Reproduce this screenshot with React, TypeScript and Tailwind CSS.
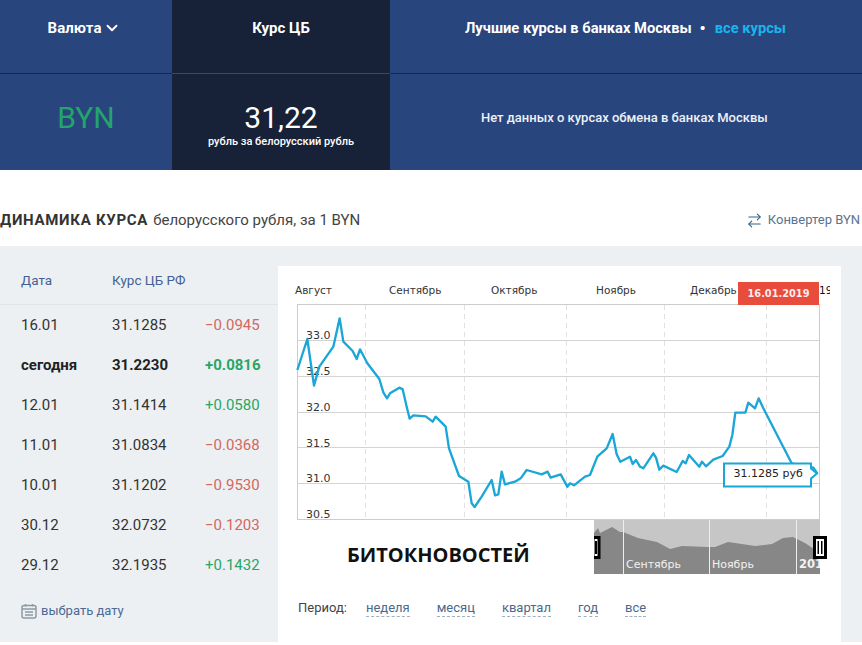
import React from "react";
import { ArrowRightLeft, ChevronDown } from "lucide-react";

const rows = [
  ["16.01", "31.1285", "−0.0945", "r"],
  ["сегодня", "31.2230", "+0.0816", "g"],
  ["12.01", "31.1414", "+0.0580", "g"],
  ["11.01", "31.0834", "−0.0368", "r"],
  ["10.01", "31.1202", "−0.9530", "r"],
  ["30.12", "32.0732", "−0.1203", "r"],
  ["29.12", "32.1935", "+0.1432", "g"],
];

const lineA = "52,315 82,222 102,362 118,305 160,245 179,160 190,230 218,258 230,282 240,253 262,295 298,342 310,382 321,400 330,385 358,368 368,373 380,425 389,461 400,451 437,454 458,470 467,455 497,485 507,550 537,633 565,650 575,715 584,726 605,695 635,645 645,691 655,688 665,620 675,658 705,650 722,640 740,615 785,628 803,620 812,638 842,628 862,665";
const lineB = "870,655 882,661 915,635 930,630 952,575 980,550 998,507 1010,568 1021,590 1050,575 1058,597 1068,585 1080,605 1090,610 1120,565 1128,578 1138,614 1150,602 1190,621 1208,588 1217,595 1227,570 1258,605 1266,590 1278,604 1300,584 1328,573 1348,545 1357,510 1366,443 1396,443 1405,413 1425,430 1436,400 1450,430 1535,595 1600,608 1612,625";

const months: [number, string][] = [[295, "Август"], [389, "Сентябрь"], [491, "Октябрь"], [596, "Ноябрь"], [690, "Декабрь"]];
const ticks: [number, string][] = [[339, "33.0"], [375, "32.5"], [411, "32.0"], [447, "31.5"], [482, "31.0"], [518, "30.5"]];

function Chart() {
  return (
    <svg viewBox="278 266 563 254" width={563} height={254} className="block" style={{ fontFamily: "'DejaVu Sans', sans-serif" }}>
      <rect x={297.5} y={304.5} width={522} height={215} fill="none" stroke="#ccc" />
      {[340.5, 376.5, 412.5, 447.5, 483.5].map((y) => (
        <line key={y} x1={298} x2={819} y1={y} y2={y} stroke="#d4d4d4" />
      ))}
      {[365.5, 464.5, 566.5, 664.5, 766.5].map((x) => (
        <line key={x} x1={x} x2={x} y1={305} y2={519} stroke="#e4e0e2" strokeDasharray="5 4" />
      ))}
      {months.map(([x, t]) => (
        <text key={t} x={x} y={294} fontSize={10.5} fill="#333">{t}</text>
      ))}
      <text x={819} y={294} fontSize={10.5} fill="#111">19</text>
      <rect x={830} y={280} width={11} height={20} fill="#fff" />
      {ticks.map(([y, t]) => (
        <text key={t} x={306} y={y} fontSize={11} fill="#333">{t}</text>
      ))}
      <g transform="translate(280 265) scale(0.33333)" fill="none" stroke="#1ba6d8" strokeWidth={7} strokeLinejoin="round">
        <polyline points={lineA + " " + lineB} />
      </g>
      <path d="M724 463.5H811V468.5L817 473.5L811 478.5V486.5H724Z" fill="#fff" stroke="#1ba6d8" strokeWidth={2} />
      <text x={733.5} y={477} fontSize={11} fill="#222">31.1285 руб</text>
      <rect x={738} y={282} width={81} height={23} fill="#e74c3c" />
      <text x={778.5} y={297} fontSize={9.8} fontWeight={700} fill="#fff" textAnchor="middle" opacity={0.9}>16.01.2019</text>
    </svg>
  );
}

function Navigator() {
  return (
    <svg viewBox="594 520 233 54" width={233} height={54} className="block" style={{ fontFamily: "'DejaVu Sans', sans-serif" }}>
      <rect x={594} y={520} width={226} height={54} fill="#c6c6c6" />
      <polygon fill="#878787" points="594,533 598,528 600,533 612,527 620,532 623,532 638,538 657,542 670,549 682,546 708,547 715,547 728,542 735,543 755,546 772,544 783,538 793,537 805,543 820,553 820,574 594,574" />
      {[623.5, 709.5, 796.5].map((x) => (
        <line key={x} x1={x} x2={x} y1={520} y2={574} stroke="#eee" />
      ))}
      <text x={626} y={568} fontSize={11} fill="#f2f2f2" fontWeight={500}>Сентябрь</text>
      <text x={712} y={568} fontSize={11} fill="#f2f2f2" fontWeight={500}>Ноябрь</text>
      <svg x={594} y={520} width={226} height={54}>
        <text x={205} y={48} fontSize={11.5} fill="#f2f2f2" fontWeight={700}>2019</text>
      </svg>
      <rect x={593} y={537.5} width={6} height={20} fill="#fff" stroke="#000" strokeWidth={3} />
      <rect x={595} y={541} width={2} height={13} fill="#000" />
      <rect x={814.5} y={537.5} width={11} height={20} fill="#fff" stroke="#000" strokeWidth={3} />
      <rect x={817.5} y={541} width={1.5} height={13} fill="#000" />
      <rect x={821} y={541} width={1.5} height={13} fill="#000" />
    </svg>
  );
}

export default function App() {
  return (
    <div className="w-[862px] h-[645px] overflow-hidden bg-white font-['Roboto',sans-serif] text-[#333]">
      <div className="grid grid-cols-[172px_218px_1fr] grid-rows-[74px_96px] h-[170px] bg-[#28457e] text-white">
        <div className="flex justify-center pt-[19px] pr-[3px] border-b border-[#14264e] text-[15px] font-bold leading-[18px]">
          Валюта <ChevronDown size={18} strokeWidth={2.5} className="ml-[2px]" />
        </div>
        <div className="flex justify-center pt-[19px] bg-[#172238] border-b border-[#2e4a83] text-[15px] font-bold leading-[18px]">Курс ЦБ</div>
        <div className="flex pl-[75px] pt-[19px] border-b border-[#14264e] text-[14.7px] font-bold leading-[18px]">
          Лучшие курсы в банках Москвы
          <span className="ml-[8px] mr-[9px] text-[17px]">•</span>
          <span className="text-[#19b5ea]">все курсы</span>
        </div>
        <div className="flex justify-center pt-[24px] text-[#23a569] text-[30px] leading-[40px]">BYN</div>
        <div className="flex flex-col items-center pt-[26px] bg-[#172238]">
          <div className="text-[30px] leading-[36px]">31,22</div>
          <div className="text-[11px] leading-[14px] font-medium mt-[-1px]">рубль за белорусский рубль</div>
        </div>
        <div className="flex pl-[91px] pt-[35px] text-[13px] font-medium leading-[18px] text-[#eef1f6]">Нет данных о курсах обмена в банках Москвы</div>
      </div>

      <div className="flex justify-between items-center h-[76px] pt-[24px]">
        <div className="text-[15px]">
          <span className="font-bold tracking-[0.7px]">ДИНАМИКА КУРСА</span>
          <span className="ml-[5px] text-[#444]">белорусского рубля, за 1 BYN</span>
        </div>
        <div className="flex items-center pr-[2px] text-[13px] text-[#5a7390]">
          <ArrowRightLeft size={17} strokeWidth={1.6} className="mr-[5px] text-[#2f6490]" />
          Конвертер BYN
        </div>
      </div>

      <div className="flex h-[396px] bg-[#edf0f2]">
        <div className="w-[278px]">
          <div className="grid grid-cols-[91px_1fr] items-center h-[59px] pl-[21px] pt-[10px] border-b border-[#e2e5e8] text-[13.5px] text-[#446294]">
            <span>Дата</span>
            <span>Курс ЦБ РФ</span>
          </div>
          {rows.map(([d, v, c, s], i) => (
            <div key={d} className={"grid grid-cols-[91px_93px_1fr] items-center h-[40px] pl-[21px] pt-[1px] text-[15px] " + (i === 1 ? "font-bold text-[#222]" : "text-[#333]")}>
              <span>{d}</span>
              <span>{v}</span>
              <span className={s === "g" ? "text-[#28a667]" : "text-[#d2685e]"}>{c}</span>
            </div>
          ))}
          <div className="flex items-center mt-[16px] pl-[21px] text-[13px] text-[#4a6a96]">
            <svg width={16} height={16} viewBox="0 0 16 16" className="mr-[4px]" fill="none" stroke="#8a9aa5" strokeWidth={1.5}>
              <rect x={1} y={2.5} width={14} height={12.5} rx={2} />
              <path d="M1 6H15M4.5 1V3.5M11.5 1V3.5M4 9H12M4 12H12" />
            </svg>
            выбрать дату
          </div>
        </div>

        <div className="w-[563px] mt-[20px] bg-white">
          <Chart />
          <div className="flex ml-[20px] h-[54px]">
            <div className="flex items-center w-[296px] pl-[49px] pt-[16px] font-['Open_Sans',sans-serif] font-bold text-[20px] text-[#111]">БИТОКНОВОСТЕЙ</div>
            <Navigator />
          </div>
          <div className="flex items-center mt-[24px] ml-[20px] text-[13px] text-[#4a6a8c]">
            <span className="text-[#444] mr-[19px]">Период:</span>
            {["неделя", "месяц", "квартал", "год", "все"].map((p) => (
              <span key={p} className="mr-[27px] border-b border-dashed border-[#9db0c4] leading-[17px]">{p}</span>
            ))}
          </div>
        </div>
      </div>
    </div>
  );
}
